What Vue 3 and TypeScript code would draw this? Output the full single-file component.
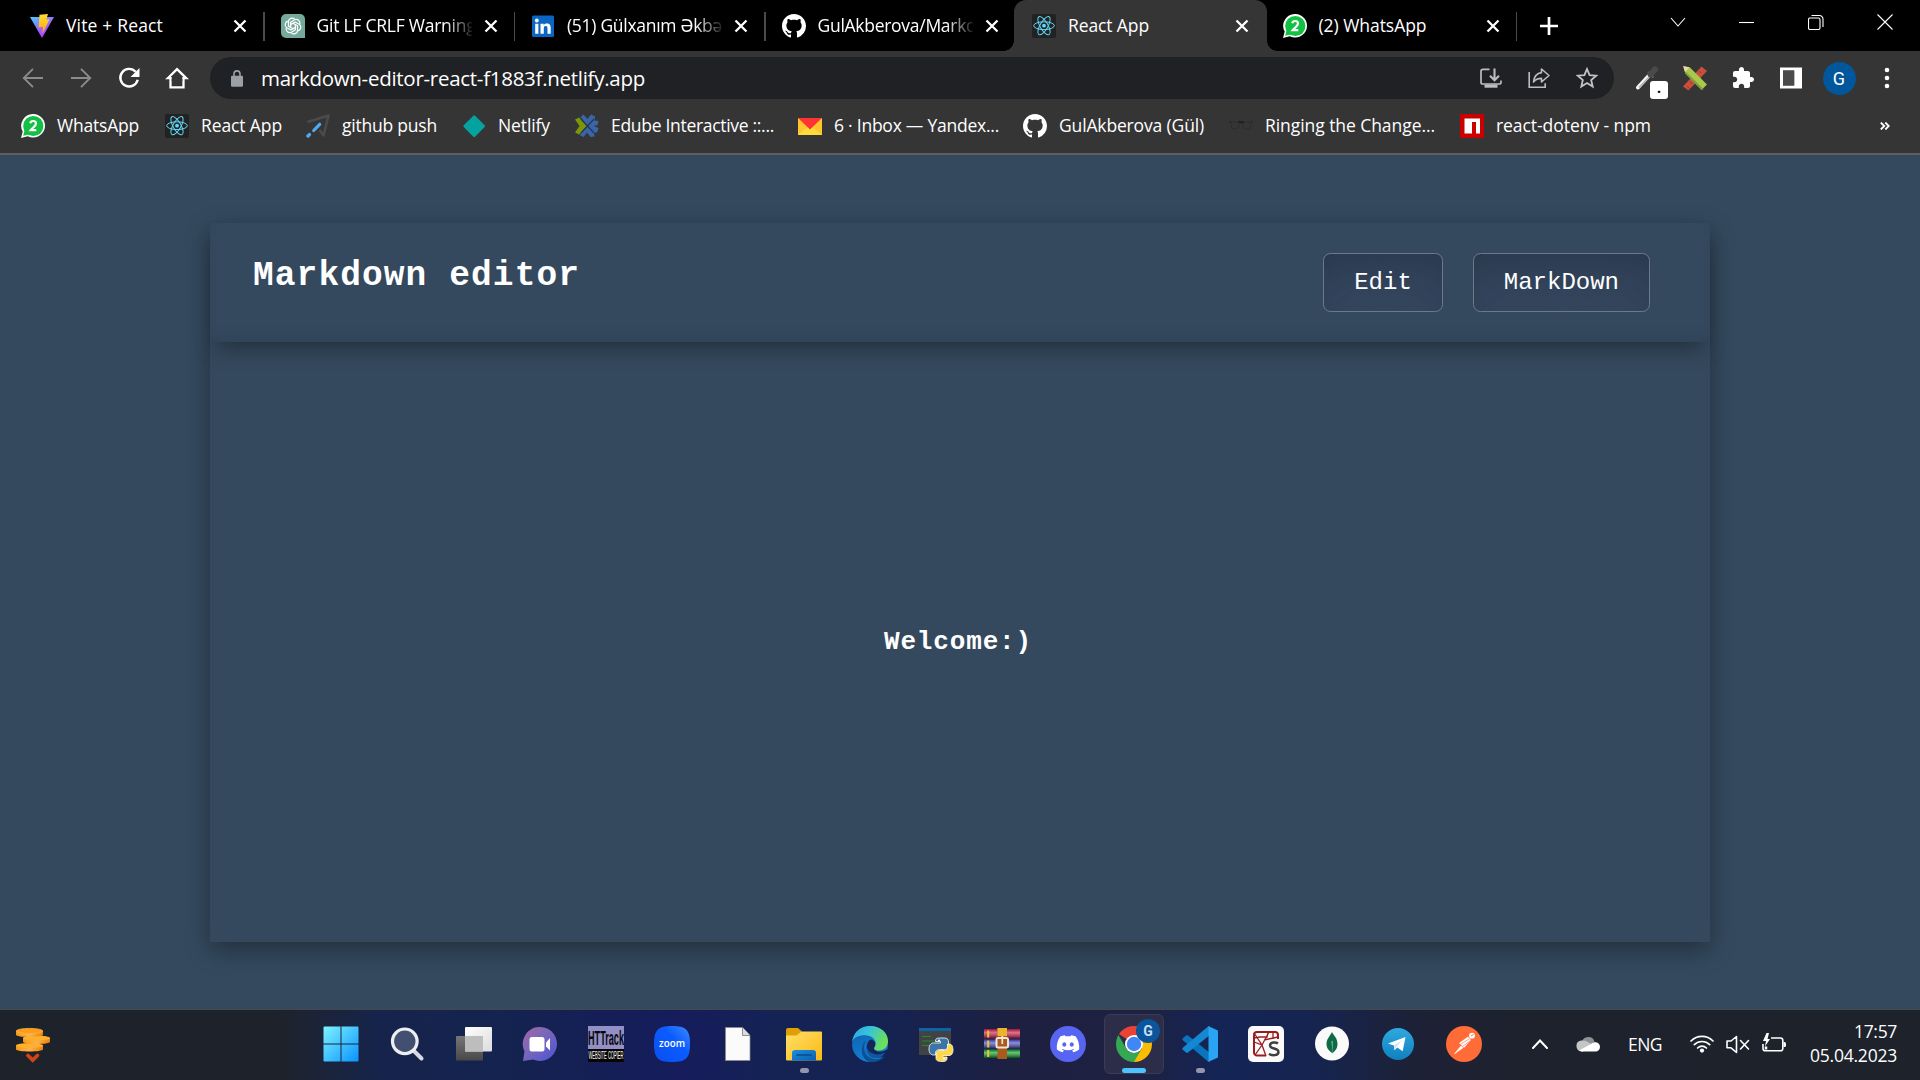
<script setup lang="ts">
interface Tab { icon: string; title: string; width: number; clipped?: boolean; active?: boolean }
interface Bookmark { icon: string; title: string; width: number; gap: number }
interface TaskItem { icon: string; state?: 'open' | 'focused' }

const tabs: Tab[] = [
  { icon: 'vite', title: 'Vite + React', width: 97 },
  { icon: 'openai', title: 'Git LF CRLF Warning', width: 159, clipped: true },
  { icon: 'linkedin', title: '(51) Gülxanım Əkbə', width: 155, clipped: true },
  { icon: 'github', title: 'GulAkberova/Markd', width: 159, clipped: true },
  { icon: 'react', title: 'React App', width: 81, active: true },
  { icon: 'whatsapp', title: '(2) WhatsApp', width: 108 },
]

const bookmarks: Bookmark[] = [
  { icon: 'whatsapp', title: 'WhatsApp', width: 82, gap: 26 },
  { icon: 'react', title: 'React App', width: 81, gap: 24 },
  { icon: 'push', title: 'github push', width: 95, gap: 25 },
  { icon: 'netlify', title: 'Netlify', width: 52, gap: 25 },
  { icon: 'edube', title: 'Edube Interactive ::...', width: 163, gap: 24 },
  { icon: 'mail', title: '6 · Inbox — Yandex...', width: 165, gap: 24 },
  { icon: 'github', title: 'GulAkberova (Gül)', width: 145, gap: 25 },
  { icon: 'glasses', title: 'Ringing the Change...', width: 170, gap: 25 },
  { icon: 'npm', title: 'react-dotenv - npm', width: 155, gap: 0 },
]

const taskItems: TaskItem[] = [
  { icon: 'start' }, { icon: 'search' }, { icon: 'taskview' }, { icon: 'chat' }, { icon: 'httrack' },
  { icon: 'zoom' }, { icon: 'file' }, { icon: 'explorer', state: 'open' }, { icon: 'edge' },
  { icon: 'python' }, { icon: 'winrar' }, { icon: 'discord' }, { icon: 'chrome', state: 'focused' },
  { icon: 'vscode', state: 'open' }, { icon: 'spyder' }, { icon: 'mongo' }, { icon: 'telegram' },
  { icon: 'postman' },
]

/* Adjusts the tracking so that a label takes exactly the given width. */
const vFit = {
  mounted(el: HTMLElement, binding: { value: number }) {
    const range = document.createRange()
    range.selectNodeContents(el)
    const natural = range.getBoundingClientRect().width
    const count = (el.textContent ?? '').trim().length
    el.style.letterSpacing = `${((binding.value - natural) / count).toFixed(3)}px`
  },
}
</script>

<template>
  <div class="screen">
    <svg class="sprite" width="0" height="0" aria-hidden="true">
      <defs>
        <linearGradient id="g-vite" x1="0" y1="0" x2=".6" y2="1"><stop offset="0" stop-color="#41d1ff" /><stop offset=".55" stop-color="#9a6cff" /><stop offset="1" stop-color="#bd34fe" /></linearGradient>
        <linearGradient id="g-bolt" x1="0" y1="0" x2="0" y2="1"><stop offset="0" stop-color="#ffdd35" /><stop offset="1" stop-color="#ffa800" /></linearGradient>
        <linearGradient id="g-start" x1="0" y1="0" x2="1" y2="1"><stop offset="0" stop-color="#7df3ff" /><stop offset="1" stop-color="#0a93ff" /></linearGradient>
        <linearGradient id="g-white" x1="0" y1="0" x2="1" y2="1"><stop offset="0" stop-color="#fff" /><stop offset="1" stop-color="#dcdcdc" /></linearGradient>
        <linearGradient id="g-grey" x1="0" y1="0" x2="0" y2="1"><stop offset="0" stop-color="#767676" /><stop offset="1" stop-color="#484848" /></linearGradient>
        <linearGradient id="g-chat" x1="0" y1="0" x2="1" y2="1"><stop offset="0" stop-color="#a663a8" /><stop offset=".4" stop-color="#7c68b8" /><stop offset="1" stop-color="#4b53d4" /></linearGradient>
        <linearGradient id="g-zoom" x1="0" y1="1" x2="1" y2="0"><stop offset="0" stop-color="#0b4ef0" /><stop offset=".6" stop-color="#0b5cff" /><stop offset="1" stop-color="#3b8cff" /></linearGradient>
        <linearGradient id="g-folder" x1="0" y1="0" x2="1" y2="1"><stop offset="0" stop-color="#ffe06a" /><stop offset="1" stop-color="#fbb913" /></linearGradient>
        <linearGradient id="g-blue" x1="0" y1="0" x2="1" y2="1"><stop offset="0" stop-color="#1a8fe0" /><stop offset="1" stop-color="#0a5fb0" /></linearGradient>
        <linearGradient id="g-edge-top" x1="0" y1="0" x2="1" y2=".4"><stop offset="0" stop-color="#2aa6dd" /><stop offset=".45" stop-color="#35c1e0" /><stop offset="1" stop-color="#6be05a" /></linearGradient>
        <linearGradient id="g-edge-low" x1="0" y1="0" x2=".6" y2="1"><stop offset="0" stop-color="#0f5da8" /><stop offset="1" stop-color="#1285dd" /></linearGradient>
        <linearGradient id="g-tg" x1="0" y1="0" x2="0" y2="1"><stop offset="0" stop-color="#2fa9e0" /><stop offset="1" stop-color="#0f80bf" /></linearGradient>
        <linearGradient id="g-coin" x1="0" y1="0" x2="1" y2="0"><stop offset="0" stop-color="#f49a14" /><stop offset=".5" stop-color="#ffb24a" /><stop offset="1" stop-color="#e8830c" /></linearGradient>
        <linearGradient id="g-book" x1="0" y1="0" x2="0" y2="1"><stop offset="0" stop-color="#000" stop-opacity=".2" /><stop offset=".35" stop-color="#fff" stop-opacity=".35" /><stop offset="1" stop-color="#000" stop-opacity=".55" /></linearGradient>
        <clipPath id="c-chrome"><circle cx="18" cy="18" r="18" /></clipPath>
      </defs>

      <symbol id="vite" viewBox="0 0 24 24"><path d="M0 3 24 3 12 24z" fill="url(#g-vite)" /><path d="M9.500.800 18 0l-1.700 5.600 3.200-.4L12.600 19.600l.3-6.900-4.300.8z" fill="url(#g-bolt)" /></symbol>
      <symbol id="openai" viewBox="0 0 24 24">
        <path d="M5 0h14a5 5 0 0 1 5 5v19H5a5 5 0 0 1-5-5V5a5 5 0 0 1 5-5z" fill="#74a99b" />
        <g fill="none" stroke="#fff" stroke-width="1.250" stroke-linejoin="round">
          <path v-for="a in 6" :key="a" d="M9.600 13.400V8.200l4-2.400a3.700 3.700 0 0 1 5.200 4.200" :transform="`rotate(${a * 60} 12 12)`" />
        </g>
      </symbol>
      <symbol id="linkedin" viewBox="0 0 24 24"><rect x="1" y="1.500" width="22" height="21.500" rx="1.500" fill="#0a66c2" /><path d="M4.200 9.700h3.200v10H4.200zM9.500 9.700h3.100v1.400c.6-1 1.700-1.700 3.200-1.700 3.100 0 3.900 2 3.900 4.700v5.600h-3.200v-5c0-1.300-.1-2.700-1.800-2.700s-1.900 1.300-1.900 2.600v5.100H9.500z" fill="#fff" /><circle cx="5.800" cy="6.500" r="1.900" fill="#fff" /></symbol>
      <symbol id="github" viewBox="0 0 16 16"><path fill="#fff" d="M8 0C3.580 0 0 3.580 0 8c0 3.540 2.290 6.530 5.470 7.590.4.070.55-.17.55-.38 0-.19-.01-.82-.01-1.490-2.010.37-2.530-.49-2.690-.94-.09-.23-.48-.94-.82-1.130-.28-.15-.68-.52-.01-.53.63-.01 1.080.58 1.230.82.72 1.210 1.870.87 2.330.66.070-.52.28-.87.51-1.070-1.780-.2-3.640-.89-3.640-3.950 0-.87.31-1.590.82-2.150-.08-.2-.36-1.020.08-2.120 0 0 .67-.21 2.200.82.64-.18 1.320-.27 2-.27.68 0 1.360.09 2 .27 1.530-1.040 2.200-.82 2.200-.82.44 1.100.16 1.920.08 2.120.51.56.82 1.270.82 2.150 0 3.070-1.870 3.750-3.650 3.950.29.25.54.73.54 1.480 0 1.070-.01 1.930-.01 2.200 0 .21.15.46.55.38A8.013 8.013 0 0 0 16 8c0-4.420-3.580-8-8-8z" /></symbol>
      <symbol id="react" viewBox="0 0 24 24"><rect width="24" height="24" rx="2" fill="#222" /><g fill="none" stroke="#61dafb" stroke-width="1"><ellipse cx="12" cy="11.700" rx="10.300" ry="3.900" /><ellipse cx="12" cy="11.700" rx="10.300" ry="3.900" transform="rotate(60 12 11.700)" /><ellipse cx="12" cy="11.700" rx="10.300" ry="3.900" transform="rotate(120 12 11.700)" /></g><circle cx="12" cy="11.700" r="1.900" fill="#61dafb" /></symbol>
      <symbol id="whatsapp" viewBox="0 0 24 24"><path d="M12.300 0a11.800 11.800 0 1 1-5.500 22.300L0 24l1.700-6.500A11.800 11.800 0 0 1 12.300 0z" fill="#fff" /><circle cx="12.300" cy="12" r="10.100" fill="#12c143" /><path d="m2.200 21.800 1.400-5.500 4.300 4.100z" fill="#12c143" /><path d="M9.300 9.200c.3-1.500 1.500-2.200 2.900-2.200 1.700 0 2.800.9 2.800 2.500 0 2.300-3.200 3.900-5.300 6.700h5.600" fill="none" stroke="#fff" stroke-width="2.200" /></symbol>
      <symbol id="push" viewBox="0 0 24 24"><path d="m1.500 8 21-6.500-5 20-4-5.500" fill="none" stroke="#4b4b4d" stroke-width="2.600" stroke-linejoin="round" /><path d="m7.700 16.500 6-6.200" stroke="#4fa9f5" stroke-width="3.200" stroke-linecap="round" /><path d="m2 22 1.400-1.400" stroke="#4fa9f5" stroke-width="3.400" stroke-linecap="round" /></symbol>
      <symbol id="netlify" viewBox="0 0 24 24"><rect x="4.200" y="4.200" width="16" height="16" rx="1.200" transform="rotate(45 12.200 12.200)" fill="#05a3a0" /></symbol>
      <symbol id="edube" viewBox="0 0 24 24"><path d="M0 5.500 4 3.500l8 8.500-8 8.500-4-2L4.500 12z" fill="#7c9608" /><path d="M5.500 3 8.500.500l4 4.500L16 .500l4 2-.5 4 4 .5-1 4-4 1 5 2-1 4-3.500 1 .5 3.500-4 .5-3.500-4.500-3.500 4.500-4-2L12 12z" fill="#3a66a8" /><path d="m6 5 13 14M19 5 6 19" stroke="#27364c" stroke-width="1.200" /></symbol>
      <symbol id="mail" viewBox="0 0 24 24"><path d="M0 4h24v17H0z" fill="#ffc42e" /><path d="m0 21 12-10 12 10z" fill="#ffda3b" /><path d="M0 4h24L12 15.500z" fill="#ff3333" /></symbol>
      <symbol id="glasses" viewBox="0 0 24 24"><g fill="none" stroke="#2c2c2c" stroke-width="1"><rect x="2" y="8" width="8" height="7" rx="3" /><rect x="14" y="8" width="8" height="7" rx="3" /></g><path d="M0 8h2.500M21.500 8H24" stroke="#222" /><path d="m9.500 7.500 2.500 1 2.500-1" fill="none" stroke="#1c1c1c" stroke-width="1.800" /></symbol>
      <symbol id="npm" viewBox="0 0 24 24"><path fill="#cb0000" d="M0 0h24v24H0z" /><path fill="#fff" d="M4.500 4.500h15.500v15h-4V8h-4v11.500H4.500z" /></symbol>

      <symbol id="back" viewBox="0 0 24 24"><path d="M22 12H3.500M12 2.800 2.800 12l9.200 9.200" fill="none" stroke="#8b8b8b" stroke-width="1.900" /></symbol>
      <symbol id="forward" viewBox="0 0 24 24"><path d="M2 12h18.500M12 2.800l9.200 9.200-9.200 9.200" fill="none" stroke="#8b8b8b" stroke-width="1.900" /></symbol>
      <symbol id="reload" viewBox="0 0 24 24"><path d="M18.700 5.800a8.800 8.800 0 1 0 2 7.900" fill="none" stroke="#fff" stroke-width="2.400" /><path d="M22.500 2v9h-9z" fill="#fff" /></symbol>
      <symbol id="home" viewBox="0 0 24 24"><path d="M5.500 12v9.300h13V12M2.800 12.200 12 3.200l9.200 9z" fill="none" stroke="#fff" stroke-width="2.300" /><path d="M6.700 10h10.600v5H6.700z" fill="#353535" /></symbol>
      <symbol id="lock" viewBox="0 0 12 17"><rect y="5.700" width="12" height="11" rx="1.300" fill="#9aa0a6" /><path d="M3 7V3.900a3 3 0 0 1 6 0V7" fill="none" stroke="#9aa0a6" stroke-width="1.600" /></symbol>
      <symbol id="install" viewBox="0 0 24 24"><g fill="none" stroke="#bdbdbd" stroke-width="1.700"><path d="M10.500 3.300H4a2 2 0 0 0-2 2v11a1.700 1.700 0 0 0 1.700 1.700h16.600a1.700 1.700 0 0 0 1.700-1.700V14.500" /><path d="M15.500 2.500v11M11 9.700l4.500 4.500 4.500-4.500" stroke-width="2.100" /></g><path d="M5.500 18.500h13v3.200h-13z" fill="#bdbdbd" /></symbol>
      <symbol id="share" viewBox="0 0 24 24"><path d="M2.200 6v15.200h16v-4" fill="none" stroke="#bdbdbd" stroke-width="1.600" /><path d="M14.500 3v3.600c-4.500.6-7.300 3.500-8 9.400 2.200-2.700 4.700-3.600 8-3.600V16l7.500-6.500z" fill="none" stroke="#bdbdbd" stroke-width="1.600" stroke-linejoin="round" /></symbol>
      <symbol id="star" viewBox="0 0 24 24"><path d="m12 3 2.600 6.100 6.600.6-5 4.400 1.500 6.500-5.700-3.500-5.700 3.500 1.500-6.500-5-4.400 6.600-.6z" fill="none" stroke="#c4c4c4" stroke-width="1.800" /></symbol>
      <symbol id="dropper" viewBox="0 0 24 24"><path d="M3 21.500 14 9.500" stroke="#f4f4f4" stroke-width="4" stroke-linecap="round" /><path d="m4 21.500 10.500-11" stroke="#aaa" stroke-width="1.200" /><path d="m13 6 5.500 5.500" stroke="#666" stroke-width="2" /><path d="m15.500 8.500 4.500-5" stroke="#4a4a4a" stroke-width="6" stroke-linecap="round" /></symbol>
      <symbol id="pencils" viewBox="0 0 24 24"><path d="m0 20.500 18.500-20L24 5 5.500 24.500z" fill="#c7503c" /><path d="m4 20 3 3m0-7 2 2m7-13 2 2" stroke="#993a2c" stroke-width="1" /><path d="m1 .500 6 1L24 18.500l-5.500 5.500L2 7z" fill="#a9c94c" /><path d="M2 5 20.500 23l-2 1L2 7.500z" fill="#7d9e36" /><path d="m0 0 6.500 1.300L2 6z" fill="#ead9a8" /></symbol>
      <symbol id="puzzle" viewBox="0 0 24 24"><path fill="#fff" d="M20.500 11H19V7c0-1.100-.9-2-2-2h-4V3.500C13 2.120 11.880 1 10.500 1S8 2.120 8 3.500V5H4c-1.100 0-1.990.9-1.990 2v3.800H3.500c1.490 0 2.700 1.210 2.700 2.700s-1.210 2.700-2.700 2.700H2V20c0 1.100.9 2 2 2h3.800v-1.500c0-1.490 1.210-2.700 2.700-2.700 1.490 0 2.700 1.210 2.700 2.700V22H17c1.100 0 2-.9 2-2v-4h1.500c1.380 0 2.500-1.120 2.500-2.500S21.880 11 20.500 11z" /></symbol>
      <symbol id="panel" viewBox="0 0 24 24"><path d="M1 1.500h22v21H1zM4 4.500v15h11.200v-15z" fill="#fff" fill-rule="evenodd" /><path d="M4 4.500h11.200v15H4z" fill="#4a4a4a" /></symbol>
      <symbol id="dots" viewBox="0 0 24 24"><g fill="#fff"><circle cx="12" cy="4" r="2.300" /><circle cx="12" cy="12" r="2.300" /><circle cx="12" cy="20" r="2.300" /></g></symbol>

      <symbol id="coins" viewBox="0 0 36 36">
        <path d="M0 18.500v3.800c0 3 27 3 27 0v-3.800z" fill="url(#g-coin)" /><ellipse cx="13.500" cy="18.500" rx="13.500" ry="2.500" fill="#ffb02c" />
        <path d="M7 11v3.800c0 3 27 3 27 0V11z" fill="url(#g-coin)" /><ellipse cx="20.500" cy="11" rx="13.500" ry="2.500" fill="#ffb02c" />
        <path d="M0 4v3.800c0 3 27 3 27 0V4z" fill="url(#g-coin)" /><ellipse cx="13.500" cy="4" rx="13.200" ry="2.600" fill="#ff9c1c" stroke="#ffb73a" stroke-width=".8" />
        <path d="m12 28.500 4.700 4.500 4.700-4.500" fill="none" stroke="#cf4514" stroke-width="3.800" stroke-linecap="round" />
      </symbol>
      <symbol id="start" viewBox="0 0 36 36"><path d="M.500 1.500A1 1 0 0 1 1.500.500h16v17H.500zM18.500.500h16a1 1 0 0 1 1 1v16h-17zM.500 18.500h17v17h-16a1 1 0 0 1-1-1zM18.500 18.500h17v16a1 1 0 0 1-1 1h-16z" fill="url(#g-start)" /></symbol>
      <symbol id="search" viewBox="0 0 36 36"><path d="m23.500 24.500 8 8" stroke="#d7dade" stroke-width="4" stroke-linecap="round" /><circle cx="14.800" cy="15.300" r="12.300" fill="#434f70" stroke="#eceef1" stroke-width="3.200" /></symbol>
      <symbol id="taskview" viewBox="0 0 36 36"><rect x="0" y="10" width="27" height="24.500" rx="1" fill="url(#g-grey)" /><rect x="9" y="1" width="27" height="24.500" rx="1" fill="url(#g-white)" /><path d="M9 10h18v15.500H9z" fill="#bdbdbd" /></symbol>
      <symbol id="chat" viewBox="0 0 36 36"><path d="M18.500 1a17 17 0 1 1-7.500 32.500L1 35l1.500-9.500A17 17 0 0 1 18.500 1z" fill="url(#g-chat)" /><rect x="7.500" y="11" width="15" height="14.500" rx="2.500" fill="#fff" /><path d="M24 16.500l4-4.500v12.500l-4-4z" fill="#fff" /></symbol>
      <symbol id="httrack" viewBox="0 0 36 36"><path fill="#918fc6" d="M0 0h36v24H0z" /><path fill="#050505" d="M0 23h36v13H0z" /></symbol>
      <symbol id="zoom" viewBox="0 0 36 36"><path d="M18 0c14 0 18 4 18 18s-4 18-18 18S0 32 0 18 4 0 18 0z" fill="url(#g-zoom)" /></symbol>
      <symbol id="file" viewBox="0 0 36 36"><path d="M5.500 1.500h17l7.500 8v25H5.500z" fill="#fbfbfb" stroke="#8a8a8a" stroke-width=".7" /><path d="M22.500 1.500v8H30" fill="#ddd" stroke="#777" stroke-width=".8" /></symbol>
      <symbol id="explorer" viewBox="0 0 36 36"><path d="M0 4a2 2 0 0 1 2-2h10l4 3.500L12 12H0z" fill="#dfa006" /><path d="M0 9.500h10.500l5-4H35a1 1 0 0 1 1 1v27a1 1 0 0 1-1 1H1a1 1 0 0 1-1-1z" fill="url(#g-folder)" /><path d="M6 34.500V27a3 3 0 0 1 3-3h18a3 3 0 0 1 3 3v7.500z" fill="url(#g-blue)" /><path d="M11 29h14" stroke="#0a4b85" stroke-width="1.700" stroke-linecap="round" /></symbol>
      <symbol id="edge" viewBox="0 0 36 36"><circle cx="18" cy="18" r="18" fill="url(#g-edge-low)" /><path d="M0 16C2 5 9 0 18 0c11 0 18 7 18 15 0 6-4 9.500-9 9.500-4 0-6-1.500-4.500-3.500 3-4 .5-10-7-11.500C8 8.500 2 11 0 16z" fill="url(#g-edge-top)" /><path d="M14 14c-5 9 0 19 10 19 4 0 7-1.500 9.500-4.500-3 6-9 8-16 7.500C9 34 7 20 14 14z" fill="#0f5094" /><path d="M22.500 21c-1.500 2 .5 4.500 5 4.500 3 0 5-.6 7-2l1.500 2-2 4c-9 5-18 0-19-7-.5-4 1-8 4-9 4 1 5.500 4.500 3.500 7.500z" fill="#14255a" /><path d="M14.500 18c0 8 8 13.500 18.500 8.500-2 4-6 6-11 5.500-6-1-9-7-7.500-14z" fill="#1156a0" /></symbol>
      <symbol id="python" viewBox="0 0 36 36"><path d="M1 2h32v27H1z" fill="#404244" /><path d="M1 2h32v3H1z" fill="#0a64a8" /><path d="M4 10.500h9M4 15h13M4 19.500h10" stroke="#28872c" stroke-width="1.100" /><g transform="translate(-1.500 0)"><path d="M23 12h5c3 0 4 1.500 4 4v4c0 2-1 3.500-4 3.500h-5c-3 0-4 1.500-4 4v1.500h-2c-3 0-4.500-2.500-4.500-6s1.500-6 4.500-6h7v-1.500h-5V15c0-2 1-3 4-3z" fill="#3b75a8" stroke="#fff" stroke-width=".8" /><path d="M33 18h1.500c3 0 4 2.500 4 6s-1.500 5.500-4 5.500h-6v1.500h4v1.500c0 2.500-2 3-5 3-4 0-6-1-6-3V28c0-2.500 1-3.500 4-3.500h4c3 0 3.500-1.500 3.500-4z" transform="translate(-2 0)" fill="#ffd846" stroke="#fff" stroke-width=".8" /><circle cx="22.500" cy="14.600" r="1.100" fill="#fff" /><circle cx="27.500" cy="32.500" r="1.100" fill="#fff" /></g></symbol>
      <symbol id="winrar" viewBox="0 0 36 36"><path d="M0 3h36v9.500H0z" fill="#d0204f" /><path d="M0 13.500h36v9H0z" fill="#4b4ec4" /><path d="M0 23.500h36V32H0z" fill="#14a12b" /><path d="M0 3h36v9.500H0z" fill="url(#g-book)" /><path d="M0 13.500h36v9H0z" fill="url(#g-book)" /><path d="M0 23.500h36V32H0z" fill="url(#g-book)" /><path d="M4.200 4.500v7M4.200 14.500v7M4.200 24v7" stroke="#eec52b" stroke-width="2" /><path d="M13.500 2h9.500v31h-9.500z" fill="#ab5a1e" /><path d="M13.500 2h9.500v8h-9.500z" fill="#e9b52d" /><rect x="12.500" y="12" width="11.500" height="9.500" rx="1.500" fill="none" stroke="#efe5d3" stroke-width="2" /><path d="M18.300 10v8" stroke="#f5e9d5" stroke-width="1.700" /></symbol>
      <symbol id="discord" viewBox="0 0 36 36"><circle cx="18" cy="18" r="18" fill="#5865f2" /><path transform="translate(6.800 6.500) scale(.935)" fill="#fff" d="M20.317 4.370a19.791 19.791 0 0 0-4.885-1.515.074.074 0 0 0-.079.037c-.211.375-.445.865-.608 1.249-1.845-.276-3.680-.276-5.487 0-.164-.393-.406-.874-.618-1.249a.077.077 0 0 0-.079-.037 19.736 19.736 0 0 0-4.885 1.515.070.070 0 0 0-.032.028C.533 9.046-.319 13.580.099 18.058a.082.082 0 0 0 .031.056c2.053 1.508 4.041 2.423 5.993 3.029a.078.078 0 0 0 .084-.028c.462-.630.873-1.295 1.226-1.994a.076.076 0 0 0-.042-.106c-.653-.248-1.274-.550-1.872-.892a.077.077 0 0 1-.008-.128c.126-.094.252-.192.372-.291a.074.074 0 0 1 .078-.011c3.928 1.793 8.180 1.793 12.061 0a.074.074 0 0 1 .079.010c.120.099.246.198.373.292a.077.077 0 0 1-.007.128 12.299 12.299 0 0 1-1.873.891.077.077 0 0 0-.041.107c.360.698.772 1.363 1.225 1.993a.076.076 0 0 0 .084.029c1.961-.607 3.950-1.522 6.002-3.029a.077.077 0 0 0 .031-.055c.500-5.177-.838-9.674-3.549-13.660a.061.061 0 0 0-.031-.029zM8.020 15.331c-1.183 0-2.157-1.086-2.157-2.419 0-1.333.956-2.419 2.157-2.419 1.211 0 2.176 1.095 2.157 2.419 0 1.333-.956 2.419-2.157 2.419zm7.975 0c-1.183 0-2.157-1.086-2.157-2.419 0-1.333.955-2.419 2.157-2.419 1.211 0 2.176 1.095 2.157 2.419 0 1.333-.946 2.419-2.157 2.419z" /></symbol>
      <symbol id="chrome" viewBox="0 0 36 36"><g clip-path="url(#c-chrome)"><path d="M18 18 0 6V0h36v9H18z" fill="#ea4335" /><path d="M18 9h18v27H17l8.800-13.500z" fill="#fbbc04" /><path d="M0 5l2.400 4 7.800 13.500A9 9 0 0 0 25.800 22.500L18 36H0z" fill="#34a853" /></g><circle cx="18" cy="18" r="9" fill="#fff" /><circle cx="18" cy="18" r="7.200" fill="#4285f4" /></symbol>
      <symbol id="vscode" viewBox="0 0 36 36"><path d="M.500 12.500 4 9.500c.700-.500 1.500-.500 2 0L28 27v8.500a2 2 0 0 1-2 0L.500 14z" fill="#0a74bd" /><path d="M.500 23.500 4 26.500c.700.500 1.500.500 2 0L28 9V.500a2 2 0 0 0-2 0L.500 22z" fill="#1488d0" /><path d="m26.500.300 9 4c.400.300.500.500.500 1v25.500c0 .500-.200.800-.500 1l-9 4z" fill="#28a4f2" /></symbol>
      <symbol id="spyder" viewBox="0 0 36 36"><rect width="36" height="36" rx="5" fill="#fafafa" /><g fill="none" stroke="#9b1c1f"><path d="M18 29.500H9a3 3 0 0 1-3-3V9a3 3 0 0 1 3-3h18a3 3 0 0 1 3 3v4" stroke-width="2" /><path d="m6 16 8 3 4 11M14 19 7 29M14 19l7-13M14 19 6 7M16 14l14-3M6 12l6-1 7 0 1-4M25 6v7" stroke-width="1.300" /></g><path d="M30 17.500c-2-1.500-8-1.800-8 2 0 4 8.500 2 8.500 6.500 0 4-7 3.800-9.500 1.800" fill="none" stroke="#fafafa" stroke-width="5" /><path d="M30 17.500c-2-1.500-8-1.800-8 2 0 4 8.500 2 8.500 6.500 0 4-7 3.800-9.500 1.800" fill="none" stroke="#3f3f3f" stroke-width="2.400" /></symbol>
      <symbol id="mongo" viewBox="0 0 36 36"><circle cx="18" cy="17.500" r="17" fill="#fafafa" /><path d="M18 6c2 4 5.500 6 5.500 12 0 5-3 7.500-5 9-2.500-1.500-6-4-6-9s3.500-8 5.500-12z" fill="#0d6b45" /><path d="M17.500 15h1.200l-.1 14z" fill="#8fc0a6" /></symbol>
      <symbol id="telegram" viewBox="0 0 36 36"><circle cx="18" cy="18" r="16" fill="url(#g-tg)" /><path d="M8 17.500 25.500 11l-2.800 14.200-5.400-3.800-2.800 2.800-.6-4.700z" fill="#fff" /><path d="m14 19.500 8.500-5.500-6.200 6.800-1.800 3.300z" fill="#c9e3f3" /></symbol>
      <symbol id="postman" viewBox="0 0 36 36"><circle cx="18" cy="18" r="18" fill="#ff6c37" /><path d="m13.500 17 8.500-6 2.500 3-6.500 7.500zM15 20l-6.500 7.800 8.500-6z" fill="#fff" stroke="#fff" stroke-width=".6" /><path d="m15 18 8-5M17 20l7-5" stroke="#ff8f68" stroke-width=".8" /><circle cx="26" cy="9.700" r="2.900" fill="#fff" /><path d="m25 10 2.500-1.500" stroke="#ff6c37" /></symbol>

      <symbol id="cloud" viewBox="0 0 24 24"><path d="M6 10a6.500 6.500 0 0 1 12.500-.500l-5 5z" fill="#8f9195" /><path d="M5.500 19.500a5.500 5.500 0 0 1-.5-10.900c4-.8 7 1.400 11 3.900l-9 7z" fill="#c4c5c7" /><path d="M3 18.500 15 12c4-3.500 9-1 9 3a4.500 4.500 0 0 1-4.500 4.500h-14z" fill="#fff" /></symbol>
      <symbol id="wifi" viewBox="0 0 24 24"><g fill="none" stroke="#fff" stroke-width="1.700" stroke-linecap="round"><path d="M1 9a15.500 15.500 0 0 1 22 0" /><path d="M4.300 12.700a10.900 10.900 0 0 1 15.400 0" /><path d="M7.600 16a6.200 6.200 0 0 1 8.800 0" /></g><circle cx="12" cy="18.600" r="2.100" fill="#fff" /></symbol>
      <symbol id="muted" viewBox="0 0 24 24"><path d="M1 9h4l5.500-4.500v16L5 15.800H1z" fill="none" stroke="#fff" stroke-width="1.600" stroke-linejoin="round" /><path d="m14.500 8.500 8 8.500m0-8.500-8 8.500" stroke="#fff" stroke-width="1.600" stroke-linecap="round" /></symbol>
      <symbol id="battery" viewBox="0 0 24 24"><path d="M9 6h9.500A2.300 2.300 0 0 1 20.800 8.300v8.200a2.300 2.300 0 0 1-2.300 2.300H3.300A2.300 2.300 0 0 1 1 16.500V12" fill="none" stroke="#fff" stroke-width="1.600" /><path d="M21.500 10h1a1.500 1.500 0 0 1 1.500 1.500v2a1.500 1.500 0 0 1-1.500 1.500h-1z" fill="#fff" /><path d="M4.500 1 1 9h3l-1 5.500L8 7H5.500L7 1z" fill="#fff" /><path d="M4 14.500v3" stroke="#fff" stroke-width="2.500" /></symbol>
    </svg>

    <header class="tabstrip">
      <div v-for="tab in tabs" :key="tab.title" class="tab" :class="{ active: tab.active }">
        <svg class="favicon"><use :href="`#${tab.icon}`" /></svg>
        <span class="tab-title" :class="{ clipped: tab.clipped }"><span v-fit="tab.width">{{ tab.title }}</span></span>
        <svg class="tab-close" viewBox="0 0 14 14"><path d="m1.500 1.500 11 11m0-11-11 11" stroke="#fff" stroke-width="2.300" /></svg>
      </div>
      <svg class="new-tab" viewBox="0 0 18 18"><path d="M9 0v18M0 9h18" stroke="#fff" stroke-width="2.700" /></svg>
      <div class="window-controls">
        <svg viewBox="0 0 16 16"><path d="m1 4 7 8 7-8" /></svg>
        <svg viewBox="0 0 16 16"><path d="M0 8.500h15" /></svg>
        <svg viewBox="0 0 16 16"><rect x=".500" y="4" width="11.500" height="11.500" rx="1.500" /><path d="M3.500 1.500h8a3.500 3.500 0 0 1 3.500 3.500v8" /></svg>
        <svg viewBox="0 0 16 16"><path d="m.500.500 15 15m0-15-15 15" /></svg>
      </div>
    </header>

    <nav class="toolbar">
      <svg class="icon"><use href="#back" /></svg>
      <svg class="icon"><use href="#forward" /></svg>
      <svg class="icon"><use href="#reload" /></svg>
      <svg class="icon"><use href="#home" /></svg>
      <div class="omnibox">
        <svg class="lock"><use href="#lock" /></svg>
        <span class="url"><span v-fit="384">markdown-editor-react-f1883f.netlify.app</span></span>
        <svg class="icon"><use href="#install" /></svg>
        <svg class="icon"><use href="#share" /></svg>
        <svg class="icon"><use href="#star" /></svg>
      </div>
      <div class="picker"><svg class="icon"><use href="#dropper" /></svg><span class="badge">.</span></div>
      <svg class="icon"><use href="#pencils" /></svg>
      <svg class="icon"><use href="#puzzle" /></svg>
      <svg class="icon"><use href="#panel" /></svg>
      <div class="avatar">G</div>
      <svg class="icon"><use href="#dots" /></svg>
    </nav>

    <nav class="bookmarks">
      <div v-for="mark in bookmarks" :key="mark.title" class="bookmark" :style="{ marginRight: `${mark.gap}px` }">
        <svg class="favicon"><use :href="`#${mark.icon}`" /></svg>
        <span class="label" :style="{ width: `${mark.width}px` }"><span v-fit="mark.width">{{ mark.title }}</span></span>
      </div>
      <svg class="more" viewBox="0 0 10 8"><path d="m.800.500 3.500 3.500L.800 7.500M5.300.500 8.800 4 5.300 7.500" fill="none" stroke="#fff" stroke-width="1.800" /></svg>
    </nav>

    <main class="page">
      <section class="card">
        <div class="card-header">
          <h1>Markdown editor</h1>
          <div class="actions">
            <button type="button">Edit</button>
            <button type="button">MarkDown</button>
          </div>
        </div>
        <div class="card-body"><h3>Welcome:)</h3></div>
      </section>
    </main>

    <footer class="taskbar">
      <svg class="coins"><use href="#coins" /></svg>
      <div class="apps">
        <div v-for="item in taskItems" :key="item.icon" class="app" :class="[item.icon, item.state]">
          <svg class="app-icon">
            <use :href="`#${item.icon}`" />
            <template v-if="item.icon === 'httrack'">
              <text class="httrack-name" x="0" y="19" textLength="36" lengthAdjust="spacingAndGlyphs">HTTrack</text>
              <text class="httrack-sub" x=".5" y="33" textLength="35" lengthAdjust="spacingAndGlyphs">WEBSITE COPIER</text>
            </template>
            <text v-else-if="item.icon === 'zoom'" class="zoom-name" x="5" y="20.500" textLength="26" lengthAdjust="spacingAndGlyphs">zoom</text>
          </svg>
          <span v-if="item.state === 'focused'" class="profile">G</span>
        </div>
      </div>
      <div class="tray">
        <svg class="chevron" viewBox="0 0 16 10"><path d="m1 9 7-7.500L15 9" fill="none" stroke="#fff" stroke-width="2" stroke-linecap="round" /></svg>
        <svg class="icon cloud"><use href="#cloud" /></svg>
        <span class="lang"><span v-fit="34">ENG</span></span>
        <svg class="icon"><use href="#wifi" /></svg>
        <svg class="icon"><use href="#muted" /></svg>
        <svg class="icon"><use href="#battery" /></svg>
        <div class="clock"><span v-fit="43">17:57</span><span v-fit="87">05.04.2023</span></div>
      </div>
    </footer>
  </div>
</template>

<style>
html,
body {
  margin: 0;
  overflow: hidden;
  background: #34495e;
}
</style>

<style scoped>
.screen {
  display: flex;
  flex-direction: column;
  width: 1920px;
  height: 1080px;
  overflow: hidden;
  color: #fff;
  font: 17.5px/24px "Open Sans", "Noto Sans", sans-serif;
  white-space: nowrap;
}
.screen * {
  box-sizing: border-box;
}
.sprite {
  position: absolute;
}
svg {
  display: block;
  flex: none;
}
.favicon,
.icon {
  width: 24px;
  height: 24px;
}

.tabstrip {
  display: flex;
  flex: none;
  height: 51px;
  padding-left: 13px;
  background: #000;
}
.tab {
  position: relative;
  display: flex;
  align-items: center;
  flex: none;
  width: 250.500px;
  padding: 1px 0 0 17px;
}
.tab:not(.active)::after {
  content: "";
  position: absolute;
  top: 12px;
  right: -1px;
  width: 1.5px;
  height: 29px;
  background: #4a4a4a;
}
.tab:has(+ .active)::after {
  display: none;
}
.tab.active {
  width: 252.5px;
  margin: 0 -1px;
  padding-left: 18px;
  border-radius: 12px 12px 0 0;
  background: #353535;
}
.tab.active::before,
.tab.active::after {
  content: "";
  position: absolute;
  bottom: 0;
  width: 10px;
  height: 10px;
}
.tab.active::before {
  left: -10px;
  background: radial-gradient(circle at 0 0, transparent 9.5px, #353535 10px);
}
.tab.active::after {
  right: -10px;
  background: radial-gradient(circle at 100% 0, transparent 9.5px, #353535 10px);
}
.tab-title {
  width: 155px;
  margin: -2px 12px 0;
  overflow: hidden;
}
.tab-title.clipped {
  -webkit-mask-image: linear-gradient(90deg, #000 128px, transparent 158px);
  mask-image: linear-gradient(90deg, #000 128px, transparent 158px);
}
.tab-close {
  width: 14px;
  height: 14px;
}
.new-tab {
  width: 18px;
  height: 18px;
  margin: 17px 0 0 24px;
}
.window-controls {
  display: flex;
  gap: 53px;
  margin: 14px 27px 0 auto;
}
.window-controls svg {
  width: 16px;
  height: 16px;
  fill: none;
  stroke: #fff;
  stroke-width: 1.1;
}

.toolbar {
  display: flex;
  flex: none;
  align-items: center;
  gap: 24px;
  height: 48px;
  padding: 6px 21px 0;
  background: #353535;
}
.omnibox {
  display: flex;
  align-items: center;
  gap: 24px;
  width: 1404px;
  height: 42px;
  margin: 0 -3px;
  padding: 0 15px 0 21px;
  border-radius: 21px;
  background: #202124;
}
.lock {
  width: 12px;
  height: 17px;
}
.url {
  flex: 1;
  margin-left: -6px;
  font-size: 20.5px;
  line-height: 28px;
}
.picker {
  position: relative;
}
.badge {
  position: absolute;
  top: 15px;
  left: 15px;
  width: 18px;
  height: 18px;
  border-radius: 3px;
  background: #fff;
  color: #000;
  font-size: 14px;
  font-weight: 700;
  line-height: 13px;
  text-align: center;
}
.avatar {
  width: 33px;
  height: 33px;
  margin: 0 -4.5px;
  border-radius: 50%;
  background: #01579b;
  font: 18px/33px Roboto, sans-serif;
  text-align: center;
}

.bookmarks {
  display: flex;
  flex: none;
  align-items: center;
  height: 56px;
  padding: 0 30px 0 21px;
  border-bottom: 2px solid #5f5f5f;
  background: #353535;
}
.bookmark {
  display: flex;
  gap: 12px;
}
.label {
  line-height: 22px;
}
.more {
  width: 10px;
  height: 8px;
  margin-left: auto;
}

.page {
  flex: 1;
  padding-top: 68px;
  background: #34495e;
  font-family: "Courier New", "Liberation Mono", monospace;
}
.card {
  display: flex;
  flex-direction: column;
  width: 1500px;
  height: 719px;
  margin: 0 auto;
  box-shadow: rgba(0, 0, 0, 0.35) 0 7.5px 22.5px;
}
.card-header {
  display: flex;
  justify-content: space-between;
  height: 119px;
  padding: 30px 60px 0 43px;
  box-shadow: rgba(0, 0, 0, 0.36) 0 13px 20px -7px, inset rgba(0, 0, 0, 0.12) 0 -9px 18px -9px;
}
h1 {
  margin: 2px 0 0;
  font-size: 34.5px;
  line-height: 41px;
  letter-spacing: 1.1px;
}
.actions {
  display: flex;
  gap: 30px;
}
button {
  height: 59px;
  padding: 0 30px 1px;
  border: 1px solid #6b7a8a;
  border-radius: 7.5px;
  background: transparent;
  box-shadow: rgba(50, 50, 93, 0.25) 0 45px 90px -18px inset, rgba(0, 0, 0, 0.3) 0 27px 54px -27px inset;
  color: #fff;
  font: 24px/27px "Courier New", "Liberation Mono", monospace;
}
.card-body {
  display: flex;
  flex: 1;
  align-items: center;
  justify-content: center;
  padding-right: 4px;
}
h3 {
  margin: 0;
  font-size: 26px;
  line-height: 30px;
  letter-spacing: 0.85px;
}

.taskbar {
  display: flex;
  flex: none;
  align-items: flex-start;
  height: 71px;
  border-top: 1.5px solid #47484d;
  background: linear-gradient(90deg, #1e232b 0, #1e232b 280px, #16244c 380px, #14234f 500px, #161c5c 680px, #142354 780px, #142354 860px, #1d2040 1020px, #1e2142 1140px, #142455 1220px, #152450 1310px, #1d2135 1420px, #1d222c 1540px, #1d222b 1920px);
}
.coins {
  width: 36px;
  height: 36px;
  margin: 17px 0 0 16px;
}
.apps {
  display: flex;
  gap: 6px;
  margin: 4px 0 0 260px;
}
.app {
  position: relative;
  width: 60px;
  height: 60px;
  padding: 12px;
  border-radius: 6px;
}
.app.start {
  padding-left: 11px;
}
.app-icon {
  width: 36px;
  height: 36px;
}
.httrack-name {
  fill: #08080f;
  font: 700 20px "Liberation Sans", sans-serif;
}
.httrack-sub {
  fill: #fff;
  font: 11px "Liberation Sans", sans-serif;
}
.zoom-name {
  fill: #fff;
  font: 600 10px "Open Sans", sans-serif;
}
.app.focused {
  border: 1px solid #3a3b55;
  padding: 11px;
  background: #2b2d49;
}
.app.open::after,
.app.focused::after {
  content: "";
  position: absolute;
  bottom: 1px;
  left: 25.5px;
  width: 9px;
  height: 5px;
  border-radius: 3px;
  background: #9295ab;
}
.app.focused::after {
  bottom: 0;
  left: 17px;
  width: 24px;
  background: #4cc2ff;
}
.profile {
  position: absolute;
  top: 4px;
  right: 3px;
  width: 24px;
  height: 24px;
  border-radius: 50%;
  background: #0a559b;
  color: #c8dcf0;
  font: 700 14px/24px Roboto, sans-serif;
  text-align: center;
}
.tray {
  display: flex;
  flex: 1;
  align-items: center;
  height: 68px;
  margin-left: 38px;
}
.chevron {
  width: 16px;
  height: 10px;
  margin-right: 28px;
}
.cloud {
  margin-right: 28px;
}
.lang {
  width: 34px;
  margin-right: 16px;
}
.lang ~ .icon {
  margin-left: 12px;
}
.clock {
  display: flex;
  flex-direction: column;
  align-items: flex-end;
  margin: -2px 23px 0 auto;
}
</style>
